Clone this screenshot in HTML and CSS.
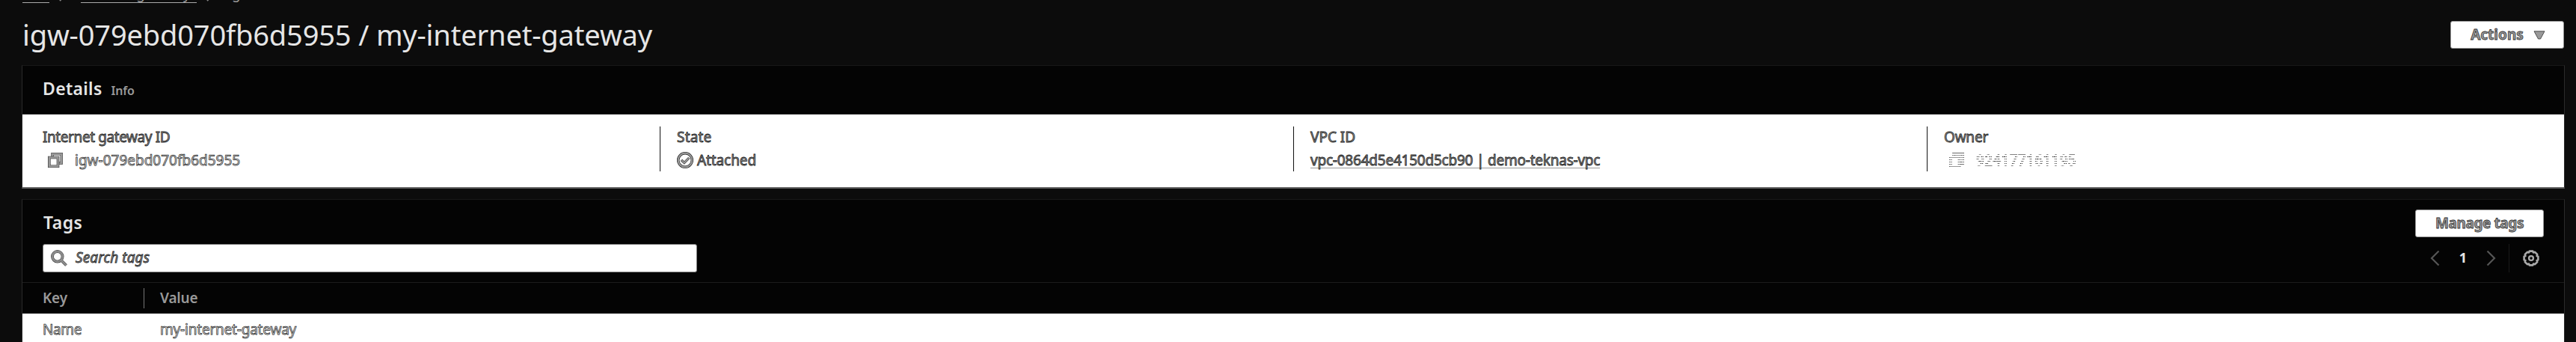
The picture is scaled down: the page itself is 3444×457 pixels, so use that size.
FILE: index.html
```html
<!DOCTYPE html>
<html lang="en"><head><meta charset="utf-8"><title>Internet gateway</title><link rel="stylesheet" href="styles.css"></head>
<body>
<nav class="crumbs"><a class="c1">VPC</a><svg class="sep" width="42" height="27" viewBox="0 0 42 27"><path d="M14 13l5 5.500-5 5.500" fill="none" stroke="#888" stroke-width="2"/></svg><a class="c2">Internet gateways</a><svg class="sep" width="42" height="27" viewBox="0 0 42 27"><path d="M14 13l5 5.500-5 5.500" fill="none" stroke="#888" stroke-width="2"/></svg><span>igw-079ebd070fb6d5955</span></nav>
<header class="page-head"><h1 class="m">igw-079ebd070fb6d5955 / my-internet-gateway</h1>
<button class="btn actions"><span>Actions</span><svg width="16" height="12" viewBox="0 0 16 12"><path d="M1 .8H15L9.500 11H6.500Z" fill="#999" stroke="#333" stroke-width=".8"/></svg></button></header>
<section class="panel details">
<div class="panel-head"><h2 class="m t-details">Details</h2><a class="m info">Info</a></div>
<div class="cols">
<div class="col"><div class="label m t-gateway">Internet gateway ID</div><div class="value ind"><svg class="copy" width="20" height="20" viewBox="0 0 20 20"><use href="#copy"/></svg><span class="m thin">igw-079ebd070fb6d5955</span></div></div>
<div class="col"><div class="label m t-state">State</div><div class="value"><svg class="ok" width="22" height="22" viewBox="0 0 22 22"><g fill="none"><circle cx="11" cy="11" r="9.300" stroke="#222" stroke-width="3.400"/><circle cx="11" cy="11" r="9.300" stroke="#999" stroke-width="2.200"/><path d="M6 10.800 9.800 14.500 16.200 8" stroke="#222" stroke-width="3.200"/><path d="M6.300 11 9.800 14.500 16 8.300" stroke="#999" stroke-width="2"/></g></svg><span class="m t-attached">Attached</span></div></div>
<div class="col"><div class="label m">VPC ID</div><div class="value"><a class="link m">vpc-0864d5e4150d5cb90 | demo-teknas-vpc</a></div></div>
<div class="col"><div class="label m t-owner">Owner</div><div class="value ind"><svg class="copy worn" width="20" height="20" viewBox="0 0 20 20"><use href="#copy"/></svg><span class="m account worn">924177161195</span></div></div>
</div></section>
<section class="panel tags">
<div class="tags-head"><h2 class="m t-tags">Tags</h2><button class="btn manage"><span>Manage tags</span></button></div>
<div class="tools"><div class="search"><svg width="22" height="22" viewBox="0 0 22 22" fill="none"><g stroke="#333" stroke-width="3.800"><circle cx="8.800" cy="8.800" r="6.800"/><path d="m13.500 13.500 7 7"/></g><g stroke="#8c8c8c" stroke-width="2.800"><circle cx="8.800" cy="8.800" r="6.800"/><path d="m13.500 13.500 7 7"/></g></svg><span class="m">Search tags</span></div>
<div class="pager"><svg width="14" height="22" viewBox="0 0 14 22"><path d="M12.500 1.500 3 11l9.500 9.500" fill="none" stroke="#555" stroke-width="2.200"/></svg><b>1</b><svg width="14" height="22" viewBox="0 0 14 22"><path d="M1.500 1.500 11 11l-9.500 9.500" fill="none" stroke="#555" stroke-width="2.200"/></svg><i></i><svg width="22" height="22" viewBox="-11 -11 22 22" fill="none" stroke="#aaa"><path stroke-width="2.600" stroke-linejoin="round" d="M-2.200-9.400H2.200L3-7.600 5.100-8.200 8.200-5.100 7.600-3 9.400-2.200V2.200L7.600 3 8.200 5.100 5.100 8.200 3 7.600 2.200 9.400H-2.200L-3 7.600-5.100 8.200-8.200 5.100-7.600 3-9.400 2.200V-2.200L-7.600-3-8.200-5.100-5.100-8.200-3-7.600Z"/><circle r="2.900" stroke-width="2.400"/></svg></div></div>
<div class="row thead"><span class="k">Key</span><span class="v">Value</span></div>
<div class="row body"><span class="k thin t-name">Name</span><span class="v thin t-my">my-internet-gateway</span></div>
</section>
<svg class="defs" width="0" height="0"><defs><g id="copy" fill="none"><path d="M6 5V1.800H18.200V14H14" stroke="#333" stroke-width="3.400"/><path d="M6 5V1.800H18.200V14H14" stroke="#999" stroke-width="2.400"/><path d="M1.800 6.500H13.500V18.200H1.800Z" fill="#fff" stroke="#333" stroke-width="3.600"/><path d="M1.800 6.500H13.500V18.200H1.800Z" stroke="#999" stroke-width="2.400"/></g></defs></svg>
</body></html>
```
FILE: styles.css
```css
* { box-sizing: border-box; }
body { margin: 0; height: 457px; overflow: hidden; background: #0c0c0c; color: #e6e6e6; font-family: "Noto Sans", sans-serif; font-size: 19px; }
h1, h2 { margin: 0; font-weight: 400; }
.m { white-space: nowrap; }
.crumbs { height: 28px; margin-top: -23px; padding-left: 30px; display: flex; line-height: 28px; color: #999; }
.crumbs a { height: 27px; border-bottom: 1px solid #aaa; }
.c1 { width: 36px; }
.c2 { width: 155px; letter-spacing: -.4px; white-space: nowrap; }
.page-head { display: flex; justify-content: space-between; align-items: flex-start; height: 82px; padding: 23px 16px 0 30px; }
h1 { line-height: 36px; font-size: 38px; letter-spacing: -.14px; }
.btn { display: flex; align-items: center; justify-content: center; height: 37px; padding: 0; background: #fff; border: 1px solid #999; border-radius: 3px; font: 700 19px/35px "Noto Sans", sans-serif; color: #999; -webkit-text-stroke: .8px #333; }
.actions { width: 152px; gap: 13px; padding-left: 2px; }
.panel { margin: 0 15px 0 29px; background: #040404; border: 1px solid #2a2a2a; border-top-color: #181818; }
.details { height: 165px; border-bottom: 2px solid #666; }
.panel-head { display: flex; align-items: baseline; height: 65px; padding-left: 27px; gap: 12px; line-height: 60px; border-bottom: 1px solid #222; }
.panel h2 { font-size: 23px; font-weight: 600; }
.t-details { letter-spacing: .3px; }
.info { font-size: 16px; font-weight: 600; color: #999; letter-spacing: -.2px; }
.cols { display: grid; grid-template-columns: 852px 847px 847px 1fr; height: 97px; padding-top: 16px; background: #fff; }
.col { height: 60px; padding-left: 22px; border-left: 1px solid #111; }
.col:first-child { border: 0; padding-left: 27px; }
.label, .value { height: 30px; line-height: 29px; color: #999; -webkit-text-stroke: .8px #222; }
.label { width: max-content; }
.value { display: flex; align-items: center; }
.ind { padding-left: 7px; gap: 16px; }
.ok { margin-right: 5px; }
.thin { color: #eee; -webkit-text-stroke: .75px #2a2a2a; }
.link { border-bottom: 1px solid #999; line-height: 22px; height: 22px; letter-spacing: -.22px; }
.t-gateway { letter-spacing: -.41px; }
.t-state { letter-spacing: .2px; }
.t-attached { letter-spacing: -.1px; }
.t-owner { letter-spacing: -.2px; }
.account { color: #fff; letter-spacing: .3px; -webkit-text-stroke-color: #000; }
.worn { -webkit-mask-image: repeating-linear-gradient(#000 0 1px, transparent 1px 3px); mask-image: repeating-linear-gradient(#000 0 1px, transparent 1px 3px); }
.tags { margin-top: 14px; height: 191px; border-bottom: 0; }
.tags-head { display: flex; justify-content: space-between; padding: 13px 27px 0 28px; height: 59px; }
.tags h2 { line-height: 35px; letter-spacing: .5px; }
.manage { width: 172px; letter-spacing: -.4px; }
.tools { display: flex; justify-content: space-between; height: 51px; padding: 0 33px 0 27px; }
.search { display: flex; align-items: center; width: 875px; height: 38px; padding-left: 10px; gap: 11px; background: #fff; border: 1px solid #777; border-radius: 3px; font-style: italic; color: #999; letter-spacing: .1px; line-height: 35px; -webkit-text-stroke: .8px #222; }
.search .m { height: 36px; }
.pager { display: flex; align-items: center; height: 38px; }
.pager b { width: 62px; text-align: center; font-size: 18px; line-height: 37px; height: 38px; }
.pager i { width: 1px; height: 38px; margin: 0 18px 0 16px; background: #1a1a1a; }
.row { display: flex; }
.thead { height: 42px; border-top: 1px solid #1c1c1c; align-items: center; font-weight: 600; color: #999; letter-spacing: -.2px; line-height: 26px; }
.k { width: 163px; padding-left: 27px; }
.thead .k { height: 27px; border-right: 1px solid #777; }
.thead .v { height: 27px; }
.v { padding-left: 21px; }
.body { height: 38px; background: #fff; line-height: 43px; }
.t-name { letter-spacing: -.4px; }
.t-my { letter-spacing: -.2px; }
.defs { position: absolute; }
```
